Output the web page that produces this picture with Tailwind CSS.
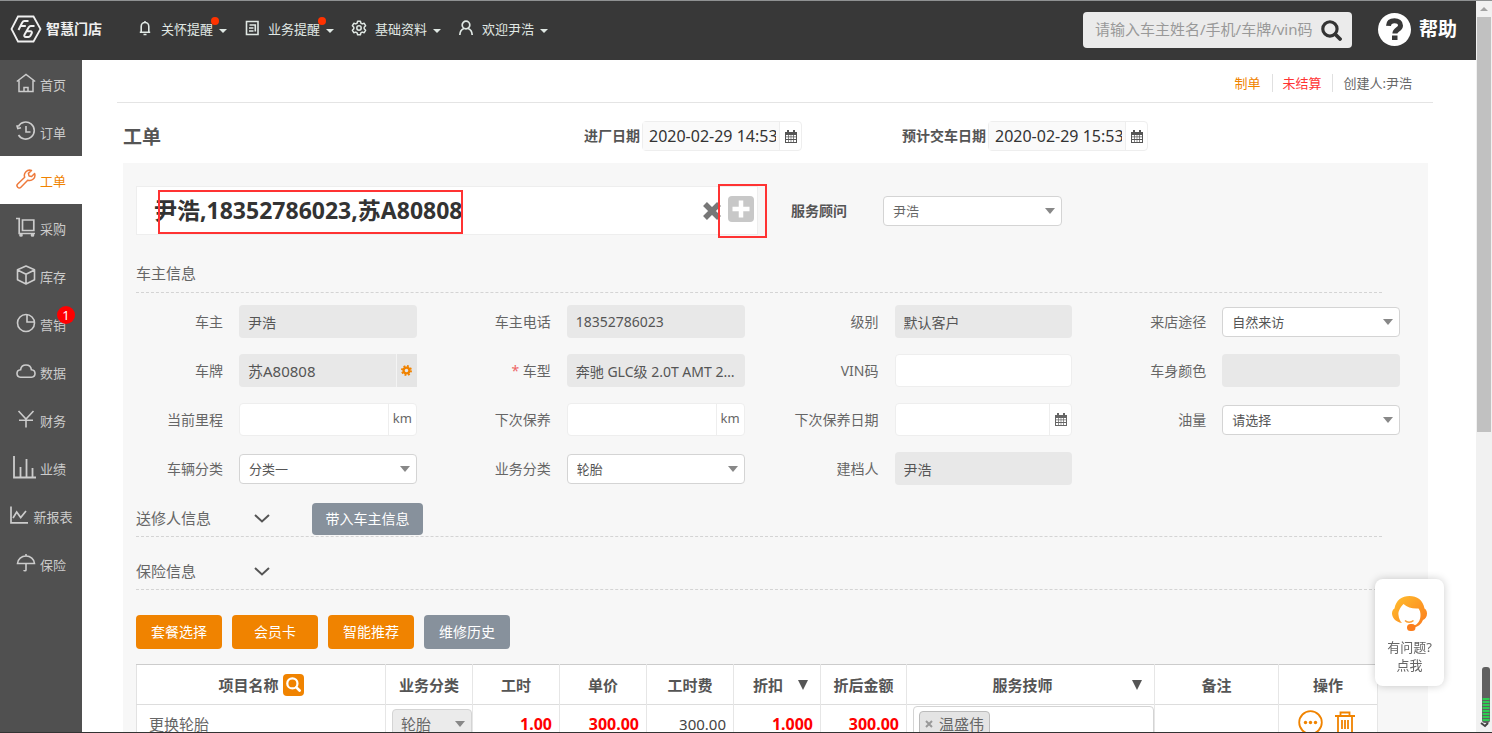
<!DOCTYPE html>
<html lang="zh-CN">
<head>
<meta charset="utf-8">
<title>工单</title>
<script src="https://cdn.jsdelivr.net/npm/@tailwindcss/browser@4"></script>
</head>
<body class="flex h-screen flex-col overflow-hidden border-t border-b border-t-[#8f9192] border-b-[#333] bg-white font-['Noto_Sans','Noto_Sans_CJK_SC',sans-serif] text-sm leading-5 text-[#666]">

<svg class="hidden" aria-hidden="true">
  <symbol id="cal" viewBox="0 0 12 13"><path fill="currentColor" fill-rule="evenodd" d="M0 2h2V0h2v2h4V0h2v2h2v11H0zM1 5v1.500h2V5zm2.700 0v1.500h2V5zm2.600 0v1.500h2V5zM9 5v1.500h2V5zM1 7.300v1.800h2V7.300zm2.700 0v1.800h2V7.300zm2.600 0v1.800h2V7.300zM9 7.300v1.800h2V7.300zM1 10v1.900h2V10zm2.700 0v1.900h2V10zm2.600 0v1.900h2V10zM9 10v1.900h2V10z"/></symbol>
  <symbol id="tri" viewBox="0 0 10 6"><path fill="currentColor" d="M0 0h10L5 6z"/></symbol>
  <symbol id="caret" viewBox="0 0 8 4"><path fill="currentColor" d="M0 0h8L4 4z"/></symbol>
  <symbol id="chev" viewBox="0 0 16 9"><path fill="none" stroke="currentColor" stroke-width="2" d="M1 1l7 6.500L15 1"/></symbol>
  <symbol id="mag" viewBox="0 0 20 20"><circle cx="8.500" cy="8.500" r="6.800" fill="none" stroke="currentColor" stroke-width="3"/><path stroke="currentColor" stroke-width="3.600" stroke-linecap="round" d="M13.800 13.800l4.300 4.300"/></symbol>
</svg>

<div class="flex min-h-0 flex-1">
  <div class="flex min-w-0 flex-1 flex-col">

    <header class="flex h-[59px] shrink-0 items-center bg-[#383838] pr-[19px] pb-[3px] pl-[10px] text-white">
      <a href="#" class="flex items-center gap-1 text-[14px] font-bold text-[#f0f0f0]">
        <svg class="h-7 w-8" viewBox="0 0 32 28" fill="none" stroke="currentColor" stroke-width="1.800"><path d="M8 1.500h15.500L30.500 14l-7 12.500H8L1.500 14z"/><path stroke-width="2" stroke-linejoin="round" d="M18.500 6h-4.200c-1 0-1.500.5-2 1.400L8.500 15M10.800 11h5M24.500 11h-3.600c-1.200 0-1.700.4-2.300 1.400l-4 7c-.8 1.500-.2 2.600 1.400 2.600h2.400c1 0 1.500-.4 2-1.200l1.200-2.300c.7-1.400.2-2.200-1.200-2.200h-3.600"/></svg>
        <span>智慧门店</span>
      </a>
      <nav class="ml-[35px] flex items-center gap-[17px] text-[13px] text-[#e0e8e4]">
        <button class="flex items-center gap-2">
          <svg class="-mt-[2px] h-4 w-4" viewBox="0 0 16 16" fill="none" stroke="currentColor" stroke-width="1.600"><path d="M4.200 12V6.500a3.800 4 0 0 1 7.600 0V12M2.800 12.300h10.400M8 1v1.500M6.500 14.500h3"/></svg>
          <span class="relative">关怀提醒<i class="absolute -top-[2px] -right-[6px] h-2 w-2 rounded-full bg-[#ff3200]"></i></span>
          <svg class="mt-1 -ml-[2px] h-1 w-2"><use href="#caret"/></svg>
        </button>
        <button class="flex items-center gap-2">
          <svg class="-mt-[2px] h-4 w-4" viewBox="0 0 16 16" fill="none" stroke="currentColor" stroke-width="1.600"><path d="M2.500 1.500h11.500v13H2.500zM5.500 5h5.800v6.500M5 8h4.500M5 11h4.500"/></svg>
          <span class="relative">业务提醒<i class="absolute -top-[2px] -right-[6px] h-2 w-2 rounded-full bg-[#ff3200]"></i></span>
          <svg class="mt-1 -ml-[2px] h-1 w-2"><use href="#caret"/></svg>
        </button>
        <button class="flex items-center gap-2">
          <svg class="-mt-[2px] h-4 w-4" viewBox="0 0 16 16" fill="none" stroke="currentColor" stroke-width="1.500" stroke-linejoin="round"><path d="M6.600 1.200h2.800l.5 2 1.300.7 2-.6 1.400 2.400L13.200 7.200v1.600l1.400 1.500-1.400 2.400-2-.6-1.300.7-.5 2H6.600l-.5-2-1.300-.7-2 .6-1.400-2.400 1.400-1.500V7.200L1.400 5.700l1.400-2.400 2 .6 1.300-.7z"/><circle cx="8" cy="8" r="2.200"/></svg>
          <span>基础资料</span>
          <svg class="mt-1 -ml-[2px] h-1 w-2"><use href="#caret"/></svg>
        </button>
        <button class="flex items-center gap-2">
          <svg class="-mt-[2px] h-4 w-4" viewBox="0 0 16 16" fill="none" stroke="currentColor" stroke-width="1.700"><circle cx="8" cy="5" r="3.800"/><path d="M1.800 15c.2-3.600 1.800-5.800 4.200-6.500M14.200 15c-.2-3.600-1.800-5.800-4.200-6.500"/></svg>
          <span>欢迎尹浩</span>
          <svg class="mt-1 -ml-[2px] h-1 w-2"><use href="#caret"/></svg>
        </button>
      </nav>
      <form class="mt-[2px] ml-auto flex h-9 w-[269px] items-center rounded bg-[#ebebeb] pr-[10px] pl-3">
        <input type="text" aria-label="搜索" placeholder="请输入车主姓名/手机/车牌/vin码" class="h-full min-w-0 flex-1 bg-transparent pb-[2px] text-[15px] text-[#333] outline-none placeholder:text-[#999]">
        <button type="button" aria-label="搜索" class="text-[#333]"><svg class="h-[21px] w-[21px]"><use href="#mag"/></svg></button>
      </form>
      <a href="#" class="ml-[26px] flex items-center gap-2 text-[19px] font-bold">
        <svg class="h-[33px] w-[33px]" viewBox="0 0 33 33"><circle cx="16.500" cy="16.500" r="16.500" fill="#fff"/><path fill="none" stroke="#383838" stroke-width="5" d="M10.500 12.800c.2-3.300 2.600-5 6-5 3.600 0 6 1.800 6 4.600 0 4.200-5.600 3.700-5.600 8.200"/><path fill="#383838" d="M14 22.500h5.500v4.500H14z"/></svg>
        <span>帮助</span>
      </a>
    </header>

    <div class="flex min-h-0 flex-1">
      <nav class="flex w-[82px] shrink-0 flex-col bg-[#505050] text-[13px] text-[#ccc] [&>a]:pt-[2px]">
        <a href="#" class="flex h-12 shrink-0 items-center justify-center gap-1"><svg class="-mt-1 h-5 w-5" viewBox="0 0 20 20" fill="none" stroke="currentColor" stroke-width="1.500"><path d="M.8 8.500L10 1.500l9.200 7M3 7.500v11h14v-11M8 18.500v-4h4v4"/></svg><span>首页</span></a>
        <a href="#" class="flex h-12 shrink-0 items-center justify-center gap-1"><svg class="-mt-1 h-5 w-5" viewBox="0 0 20 20" fill="none" stroke="currentColor" stroke-width="1.600"><path d="M2.300 5.500A8.500 8.500 0 1 1 2.500 14M10 5v6h4.500M.8 4.200l1 3.300 3.200-.8"/></svg><span>订单</span></a>
        <a href="#" class="flex h-12 shrink-0 items-center justify-center gap-1 bg-white text-[#f08300]"><svg class="-mt-1 h-5 w-5" viewBox="0 0 20 20" fill="none" stroke="#ee7a3c" stroke-width="1.500" stroke-linejoin="round"><path d="M15.500 1.500a5.300 5.300 0 0 0-6.800 6.800l-7 6.700a2.200 2.200 0 0 0 3.200 3.200l6.800-7a5.300 5.300 0 0 0 6.900-6.700l-3 3-2.600-.6-.6-2.500z"/></svg><span>工单</span></a>
        <a href="#" class="flex h-12 shrink-0 items-center justify-center gap-1"><svg class="-mt-1 h-5 w-5" viewBox="0 0 20 20" fill="none" stroke="currentColor" stroke-width="1.700"><path d="M0 1.500h3.200v15H19M6.500 3h11.300v10.500H6.500z"/><circle cx="5" cy="18" r="1" /><circle cx="16.500" cy="18" r="1"/></svg><span>采购</span></a>
        <a href="#" class="flex h-12 shrink-0 items-center justify-center gap-1"><svg class="-mt-1 h-5 w-5" viewBox="0 0 20 20" fill="none" stroke="currentColor" stroke-width="1.600" stroke-linejoin="round"><path d="M10 1l8.500 3.800v10L10 19l-8.500-4.200v-10zM1.500 5L10 9.200 18.500 5M10 9.200V19"/></svg><span>库存</span></a>
        <a href="#" class="relative flex h-12 shrink-0 items-center justify-center gap-1"><svg class="-mt-1 h-5 w-5" viewBox="0 0 20 20" fill="none" stroke="currentColor" stroke-width="1.600"><circle cx="10" cy="10" r="8.500"/><path d="M11 1.500V9h7.500"/></svg><span>营销</span><b class="absolute top-[6px] left-[57px] h-[18px] w-[18px] rounded-full bg-[#f00] text-center text-[13px] leading-[18px] font-normal text-white">1</b></a>
        <a href="#" class="flex h-12 shrink-0 items-center justify-center gap-1"><svg class="-mt-1 h-5 w-5" viewBox="0 0 20 20" fill="none" stroke="currentColor" stroke-width="1.600"><path d="M4.500 16.300C2.300 16 1 14.500 1 12.500s1.500-3.500 3.600-3.700C5 5.800 7.200 4 10 4s5 1.800 5.400 4.800c2.200.2 3.600 1.700 3.600 3.700s-1.300 3.500-3.500 3.800z"/></svg><span>数据</span></a>
        <a href="#" class="flex h-12 shrink-0 items-center justify-center gap-1"><svg class="-mt-1 h-5 w-5" viewBox="0 0 20 20" fill="none" stroke="currentColor" stroke-width="1.600"><path d="M2.500 2l7.500 8 7.500-8M10 10v8.500M3 11.300h14"/></svg><span>财务</span></a>
        <a href="#" class="flex h-12 shrink-0 items-center justify-center gap-1"><svg class="-mt-1 -ml-1 h-6 w-6" viewBox="0 0 24 24" fill="none" stroke="currentColor" stroke-width="1.800"><path d="M2 1v21.500h22M8.500 12v10M14.500 4v18M20.500 13v9"/></svg><span>业绩</span></a>
        <a href="#" class="flex h-12 shrink-0 items-center justify-center gap-1"><svg class="-mt-1 h-5 w-5" viewBox="0 0 20 20" fill="none" stroke="currentColor" stroke-width="1.700"><path d="M2 1.500v16.300H19M4 13l3.700-6 4 5.500L17 6"/></svg><span>新报表</span></a>
        <a href="#" class="flex h-12 shrink-0 items-center justify-center gap-1"><svg class="-mt-1 h-5 w-5" viewBox="0 0 20 20" fill="none" stroke="currentColor" stroke-width="1.600"><path d="M1.500 10.500C1.800 6 5.500 3 10 3s8.200 3 8.500 7.500zM10 1v2M10 10.500V17c0 1-2 1-2 0"/></svg><span>保险</span></a>
      </nav>

      <main class="min-w-0 flex-1 pr-[43px] pl-[35px]">
        <div class="flex h-[43px] items-center justify-end border-b border-[#e4e4e4] pt-1 pr-[21px] text-[13px] leading-[18px]">
          <span class="border-r border-[#e0e0e0] pr-[11px] text-[#f08300]">制单</span>
          <span class="border-r border-[#e0e0e0] px-[10px] text-[#f33]">未结算</span>
          <span class="pl-[11px]">创建人:尹浩</span>
        </div>

        <div class="pr-[5px] pl-[6px]">
          <div class="flex h-[60px] items-center pt-[6px] font-bold text-[#555]">
            <h1 class="w-[461px] pt-[2px] text-[19px] leading-6">工单</h1>
            <label for="d1">进厂日期</label>
            <div class="ml-[2px] flex h-[30px] w-40 rounded-sm border border-[#eee] font-normal">
              <input id="d1" value="2020-02-29 14:53" class="min-w-0 flex-1 bg-[#fafafa] pr-[3px] pl-[6px] text-[16px] text-[#333]">
              <button aria-label="选择日期" class="flex w-[22px] items-center justify-center border-l border-[#eee]"><svg class="h-[13px] w-3"><use href="#cal"/></svg></button>
            </div>
            <label for="d2" class="ml-[100px]">预计交车日期</label>
            <div class="ml-[2px] flex h-[30px] w-40 rounded-sm border border-[#eee] font-normal">
              <input id="d2" value="2020-02-29 15:53" class="min-w-0 flex-1 bg-[#fafafa] pr-[3px] pl-[6px] text-[16px] text-[#333]">
              <button aria-label="选择日期" class="flex w-[22px] items-center justify-center border-l border-[#eee]"><svg class="h-[13px] w-3"><use href="#cal"/></svg></button>
            </div>
          </div>

          <div class="bg-[#f7f7f7] pt-[23px] pr-7 pl-[13px]">
            <div class="flex items-center">
              <div class="relative flex h-[49px] w-[622px] items-center border border-[#eee] bg-white pr-[3px] pl-[17px]">
                <input aria-label="客户" value="尹浩,18352786023,苏A80808" class="min-w-0 flex-1 pb-1 text-[23px] font-bold text-[#333]">
                <button aria-label="清除" class="text-[#777]"><svg class="h-[18px] w-[18px]" viewBox="0 0 18 18"><path stroke="currentColor" stroke-width="5.500" d="M2 2l14 14M16 2L2 16"/></svg></button>
                <button aria-label="新增" class="mb-1 ml-[7px]"><svg class="h-[26px] w-[26px]" viewBox="0 0 26 26"><rect width="26" height="26" rx="4" fill="#c8c8c8"/><path stroke="#fff" stroke-width="4.500" d="M13 4.500v17M4.500 13h17"/></svg></button>
                <i class="pointer-events-none absolute top-[3px] left-[21px] h-11 w-[305px] border-2 border-[#f33]"></i>
                <i class="pointer-events-none absolute -top-[3px] left-[581px] h-[54px] w-[49px] border-2 border-[#f33]"></i>
              </div>
              <label for="adv" class="ml-[33px] font-bold text-[#555]">服务顾问</label>
              <div class="relative ml-9 w-[179px]">
                <select id="adv" class="block h-[30px] w-full appearance-none rounded border border-[#d4d4d4] bg-white pl-[9px] text-[13px]"><option>尹浩</option></select>
                <svg class="pointer-events-none absolute top-3 right-[7px] h-[6px] w-[10px] text-[#888]"><use href="#tri"/></svg>
              </div>
            </div>

            <h2 class="mt-[19px] mr-[18px] flex h-[39px] items-center border-b border-dashed border-[#d4d4d4] text-[15px]">车主信息</h2>

            <div class="mt-3 grid auto-rows-[33px] grid-cols-4 items-center gap-x-[47px] gap-y-[16px] [&_label]:-ml-px">
              <div class="flex items-center gap-4"><label for="f1" class="w-[88px] shrink-0 text-right">车主</label><input id="f1" readonly value="尹浩" class="h-[33px] w-full min-w-0 rounded-sm bg-[#e8e8e8] px-[9px] text-[#555]"></div>
              <div class="flex items-center gap-4"><label for="f2" class="w-[88px] shrink-0 text-right">车主电话</label><input id="f2" readonly value="18352786023" class="h-[33px] w-full min-w-0 rounded-sm bg-[#e8e8e8] px-[9px] text-[#555]"></div>
              <div class="flex items-center gap-4"><label for="f3" class="w-[88px] shrink-0 text-right">级别</label><input id="f3" readonly value="默认客户" class="h-[33px] w-full min-w-0 rounded-sm bg-[#e8e8e8] px-[9px] text-[#555]"></div>
              <div class="flex items-center gap-4"><label for="f4" class="w-[88px] shrink-0 text-right">来店途径</label><div class="relative flex-1"><select id="f4" class="block h-[30px] w-full appearance-none rounded border border-[#d4d4d4] bg-white pl-[9px] text-[13px] text-[#555]"><option>自然来访</option></select><svg class="pointer-events-none absolute top-3 right-[7px] h-[6px] w-[10px] text-[#888]"><use href="#tri"/></svg></div></div>

              <div class="flex items-center gap-4"><label for="f5" class="w-[88px] shrink-0 text-right">车牌</label><div class="flex h-[33px] min-w-0 flex-1"><input id="f5" readonly value="苏A80808" class="min-w-0 flex-1 rounded-l-sm bg-[#e8e8e8] px-[9px] text-[15px] text-[#555]"><button aria-label="设置" class="flex w-[21px] items-center justify-center border-l border-[#f4f4f4] bg-[#e5e5e5] text-[#f08300]"><svg class="h-[11px] w-[11px]" viewBox="0 0 12 12"><circle cx="6" cy="6" r="3.200" fill="none" stroke="currentColor" stroke-width="2.500"/><circle cx="6" cy="6" r="5" fill="none" stroke="currentColor" stroke-width="2" stroke-dasharray="2 1.927"/></svg></button></div></div>
              <div class="flex items-center gap-4"><label for="f6" class="w-[88px] shrink-0 text-right"><span class="text-[#e66]">*</span> 车型</label><input id="f6" readonly value="奔驰 GLC级 2.0T AMT 2020款" class="h-[33px] w-full min-w-0 rounded-sm bg-[#e8e8e8] pr-[3px] pl-[9px] text-ellipsis text-[#555]"></div>
              <div class="flex items-center gap-4"><label for="f7" class="w-[88px] shrink-0 text-right">VIN码</label><input id="f7" class="h-[33px] w-full min-w-0 rounded-sm border border-[#eee] bg-white px-[9px]"></div>
              <div class="flex items-center gap-4"><label for="f8" class="w-[88px] shrink-0 text-right">车身颜色</label><input id="f8" readonly class="h-[33px] w-full min-w-0 rounded-sm bg-[#e8e8e8] px-[9px]"></div>

              <div class="flex items-center gap-4"><label for="f9" class="w-[88px] shrink-0 text-right">当前里程</label><div class="flex h-[33px] min-w-0 flex-1 rounded-sm border border-[#eee] bg-white"><input id="f9" class="min-w-0 flex-1 px-[9px]"><span class="flex w-7 items-center justify-center border-l border-[#eee] pb-1 text-[13px]">km</span></div></div>
              <div class="flex items-center gap-4"><label for="f10" class="w-[88px] shrink-0 text-right">下次保养</label><div class="flex h-[33px] min-w-0 flex-1 rounded-sm border border-[#eee] bg-white"><input id="f10" class="min-w-0 flex-1 px-[9px]"><span class="flex w-7 items-center justify-center border-l border-[#eee] pb-1 text-[13px]">km</span></div></div>
              <div class="flex items-center gap-4"><label for="f11" class="w-[88px] shrink-0 text-right">下次保养日期</label><div class="flex h-[33px] min-w-0 flex-1 rounded-sm border border-[#eee] bg-white"><input id="f11" class="min-w-0 flex-1 px-[9px]"><button aria-label="选择日期" class="flex w-[22px] items-center justify-center border-l border-[#eee]"><svg class="h-[13px] w-3"><use href="#cal"/></svg></button></div></div>
              <div class="flex items-center gap-4"><label for="f12" class="w-[88px] shrink-0 text-right">油量</label><div class="relative flex-1"><select id="f12" class="block h-[30px] w-full appearance-none rounded border border-[#d4d4d4] bg-white pl-[9px] text-[13px] text-[#555]"><option>请选择</option></select><svg class="pointer-events-none absolute top-3 right-[7px] h-[6px] w-[10px] text-[#888]"><use href="#tri"/></svg></div></div>

              <div class="flex items-center gap-4"><label for="f13" class="w-[88px] shrink-0 text-right">车辆分类</label><div class="relative flex-1"><select id="f13" class="block h-[30px] w-full appearance-none rounded border border-[#d4d4d4] bg-white pl-[9px] text-[13px] text-[#555]"><option>分类一</option></select><svg class="pointer-events-none absolute top-3 right-[7px] h-[6px] w-[10px] text-[#888]"><use href="#tri"/></svg></div></div>
              <div class="flex items-center gap-4"><label for="f14" class="w-[88px] shrink-0 text-right">业务分类</label><div class="relative flex-1"><select id="f14" class="block h-[30px] w-full appearance-none rounded border border-[#d4d4d4] bg-white pl-[9px] text-[13px] text-[#555]"><option>轮胎</option></select><svg class="pointer-events-none absolute top-3 right-[7px] h-[6px] w-[10px] text-[#888]"><use href="#tri"/></svg></div></div>
              <div class="flex items-center gap-4"><label for="f15" class="w-[88px] shrink-0 text-right">建档人</label><input id="f15" readonly value="尹浩" class="h-[33px] w-full min-w-0 rounded-sm bg-[#e8e8e8] px-[9px] text-[#555]"></div>
            </div>

            <div class="mt-[18px] mr-[18px] flex h-[34px] items-start border-b border-dashed border-[#d4d4d4]">
              <h2 class="w-[118px] text-[15px] leading-[30px]">送修人信息</h2>
              <button aria-label="展开送修人信息" class="h-[30px] text-[#555]"><svg class="h-[9px] w-4"><use href="#chev"/></svg></button>
              <button class="ml-[42px] h-8 w-[111px] rounded-sm bg-[#87919c] text-white">带入车主信息</button>
            </div>
            <div class="mt-4 mr-[18px] flex h-[37px] items-center border-b border-dashed border-[#d4d4d4]">
              <h2 class="w-[118px] text-[15px]">保险信息</h2>
              <button aria-label="展开保险信息" class="text-[#555]"><svg class="h-[9px] w-4"><use href="#chev"/></svg></button>
            </div>

            <div class="mt-[25px] flex gap-[10px] text-white">
              <button class="h-[34px] w-[86px] rounded-sm bg-[#f08300]">套餐选择</button>
              <button class="h-[34px] w-[86px] rounded-sm bg-[#f08300]">会员卡</button>
              <button class="h-[34px] w-[86px] rounded-sm bg-[#f08300]">智能推荐</button>
              <button class="h-[34px] w-[86px] rounded-sm bg-[#87919c]">维修历史</button>
            </div>

            <div class="mt-[15px] pr-[23px]">
              <table class="w-full table-fixed border-collapse border border-t-[#ccc] border-[#e2e2e2] bg-white text-[15px]">
                <colgroup><col class="w-[249px]"><col class="w-[87px]"><col class="w-[87px]"><col class="w-[87px]"><col class="w-[87px]"><col class="w-[87px]"><col class="w-[86px]"><col class="w-[248px]"><col class="w-[124px]"><col class="w-[99px]"></colgroup>
                <thead>
                  <tr class="h-10 border-b border-[#ddd] text-[#555] [&>th]:border-r [&>th]:border-[#e6e6e6] [&>th]:p-0">
                    <th><span class="flex items-center justify-center gap-1">项目名称<button aria-label="查找项目" class="flex h-[22px] w-[21px] items-center justify-center rounded bg-[#f08300] text-white"><svg class="h-[15px] w-[15px]" viewBox="0 0 20 20"><use href="#mag"/></svg></button></span></th>
                    <th>业务分类</th><th>工时</th><th>单价</th><th>工时费</th>
                    <th><span class="flex items-center justify-center gap-[15px] pl-[7px]">折扣<svg class="h-[10px] w-[10px]" viewBox="0 0 10 10"><path fill="currentColor" d="M0 0h10L5 10z"/></svg></span></th>
                    <th>折后金额</th>
                    <th><span class="flex items-center pr-3 pl-[6px]"><span class="flex-1">服务技师</span><svg class="h-[10px] w-[10px]" viewBox="0 0 10 10"><path fill="currentColor" d="M0 0h10L5 10z"/></svg></span></th>
                    <th>备注</th><th>操作</th>
                  </tr>
                </thead>
                <tbody>
                  <tr class="h-[38px] text-right [&>td]:border-r [&>td]:border-[#e6e6e6] [&>td]:p-0">
                    <td class="text-left"><span class="pl-3">更换轮胎</span></td>
                    <td><div class="relative ml-[6px]"><select aria-label="业务分类" class="block h-[30px] w-full appearance-none rounded border border-[#d4d4d4] bg-[#ebebeb] pl-2 text-[15px]"><option>轮胎</option></select><svg class="pointer-events-none absolute top-3 right-[7px] h-[6px] w-[10px] text-[#888]"><use href="#tri"/></svg></div></td>
                    <td class="text-[16px] font-bold text-[#f00]"><span class="pr-[7px]">1.00</span></td>
                    <td class="text-[16px] font-bold text-[#f00]"><span class="pr-[7px]">300.00</span></td>
                    <td class="text-[#444]"><span class="pr-[7px]">300.00</span></td>
                    <td class="text-[16px] font-bold text-[#f00]"><span class="pr-[7px]">1.000</span></td>
                    <td class="text-[16px] font-bold text-[#f00]"><span class="pr-[7px]">300.00</span></td>
                    <td><div class="ml-[6px] flex h-9 items-center rounded border border-[#d4d4d4] pl-[5px]"><span class="flex h-[25px] items-center rounded border border-[#bbb] bg-[#e4e4e4] px-[5px]"><button aria-label="移除" class="flex h-4 w-[14px] items-center text-[#999]"><svg class="h-2 w-2" viewBox="0 0 8 8"><path stroke="currentColor" stroke-width="2" d="M1 1l6 6M7 1L1 7"/></svg></button>温盛伟</span></div></td>
                    <td></td>
                    <td><div class="flex items-center justify-center gap-3 pr-[3px] pb-[3px] text-[#f08300]">
                      <button aria-label="更多"><svg class="h-[25px] w-[25px]" viewBox="0 0 25 25"><circle cx="12.500" cy="12.500" r="11.300" fill="none" stroke="currentColor" stroke-width="1.800"/><circle cx="7.500" cy="12.500" r="1.700" fill="currentColor"/><circle cx="12.500" cy="12.500" r="1.700" fill="currentColor"/><circle cx="17.500" cy="12.500" r="1.700" fill="currentColor"/></svg></button>
                      <button aria-label="删除"><svg class="h-[23px] w-5" viewBox="0 0 20 23" fill="none" stroke="currentColor" stroke-width="1.800"><path d="M0 5h20M5.500 5V1.500h9V5M3 5v17h14V5M7 9v9M10 9v9M13 9v9"/></svg></button>
                    </div></td>
                  </tr>
                </tbody>
              </table>
            </div>
          </div>
        </div>
      </main>
    </div>
  </div>

  <div class="w-4 shrink-0 bg-[#f1f1f1]" aria-hidden="true">
    <div class="flex h-4 items-center justify-center text-[#a3a3a3]"><svg class="h-1 w-2 rotate-180"><use href="#caret"/></svg></div>
    <div class="mx-px h-[415px] bg-[#c1c1c1]"></div>
  </div>
</div>

<a href="#" class="fixed right-12 bottom-[47px] flex h-[107px] w-[69px] flex-col items-center rounded-lg bg-white pt-4 text-[13px] leading-[18px] shadow-[0_0_8px_rgba(0,0,0,0.2)]">
  <svg class="mb-[6px] h-[37px] w-[35px]" viewBox="0 0 35 37"><defs><linearGradient id="hair" x2="1" y2="1"><stop offset="0" stop-color="#ffc02e"/><stop offset="1" stop-color="#fb7a1e"/></linearGradient></defs><path fill="url(#hair)" d="M10 28C3 27 0 22 0 18.500c0-2.500 1-4 2.500-5C4 5 10 1 17.500 1S31 5 32.500 13.500c1.500 1 2.500 2.500 2.500 5 0 3-1.500 5.500-4 6.500-1.800 4.500-5 7-9.500 7.500l-.5-1.500c5-1.500 7.500-5.500 7.500-11 0-2.500-.5-4.500-2-6.500-6 .5-11-1-15-4.500C7.500 13 6 17 6.500 20c.4 3.500 1.500 6 3.500 8z"/><path fill="none" stroke="#f9a13a" stroke-width="1.500" d="M13 25.500c2 2.200 6 2.200 8.500 0"/><rect x="15" y="29" width="8.500" height="7" rx="3.500" fill="#fb7d1c"/></svg>
  <span>有问题?</span><span>点我</span>
</a>
<svg class="fixed right-px bottom-[5px] h-[61px] w-[11px]" viewBox="0 0 11 61" aria-hidden="true"><rect x="2" y="0" width="8" height="56" rx="3" fill="#606060"/><path stroke="#2ecc52" stroke-width="7" stroke-dasharray="2 1" d="M6 31v24"/><path fill="none" stroke="#444" stroke-width="2" d="M1 56l4 3 3-3"/></svg>
</body>
</html>
